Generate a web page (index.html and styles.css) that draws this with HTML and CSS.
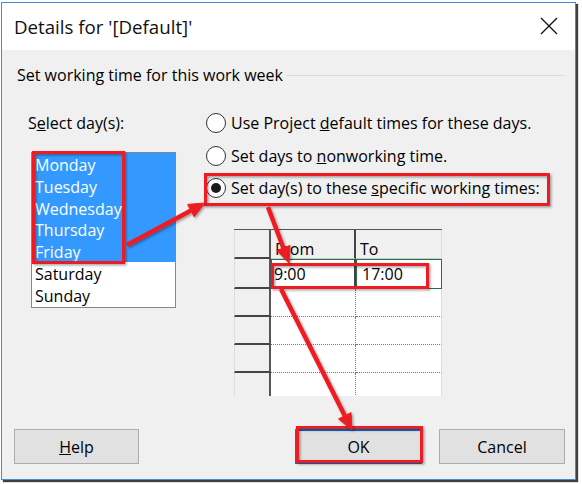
FILE: index.html
```html
<!DOCTYPE html>
<html>
<head>
<meta charset="utf-8">
<link rel="stylesheet" href="styles.css">
</head>
<body>
<div class="dialog">
  <div class="titlebar">
    <span class="title">Details for '[Default]'</span>
    <svg class="close" width="18" height="18" viewBox="0 0 18 18"><path d="M1 1 L17 17 M17 1 L1 17" stroke="#111" stroke-width="1.3" fill="none"/></svg>
  </div>
  <div class="body">
    <div class="group-head"><span>Set working time for this work week</span><span class="rule"></span></div>
    <div class="main">
      <div class="left">
        <div class="label">S<u>e</u>lect day(s):</div>
        <div class="listbox">
          <div class="item sel">Monday</div>
          <div class="item sel">Tuesday</div>
          <div class="item sel">Wednesday</div>
          <div class="item sel">Thursday</div>
          <div class="item sel">Friday</div>
          <div class="item">Saturday</div>
          <div class="item">Sunday</div>
        </div>
      </div>
      <div class="right">
        <div class="radios">
          <div class="radio"><span class="circle"></span><span>Use Project <u>d</u>efault times for these days.</span></div>
          <div class="radio"><span class="circle"></span><span>Set days to <u>n</u>onworking time.</span></div>
          <div class="radio"><span class="circle on"></span><span>Set day(s) to these <u>s</u>pecific working times:</span></div>
        </div>
        <div class="grid">
          <div class="c hdr rh"></div><div class="c hdr">From</div><div class="c hdr last">To</div>
          <div class="c rh"></div><div class="c d r1a">9:00</div><div class="c d r1b">17:00</div>
          <div class="c rh"></div><div class="c d"></div><div class="c d last"></div>
          <div class="c rh"></div><div class="c d"></div><div class="c d last"></div>
          <div class="c rh"></div><div class="c d"></div><div class="c d last"></div>
          <div class="c rh"></div><div class="c d"></div><div class="c d last"></div>
        </div>
      </div>
    </div>
    <div class="buttons">
      <button class="btn"><u>H</u>elp</button>
      <span class="spacer"></span>
      <button class="btn ok">OK</button>
      <button class="btn">Cancel</button>
    </div>
  </div>
</div>
<svg class="annot" width="582" height="484" viewBox="0 0 582 484">
  <defs>
    <filter id="sh" x="-20%" y="-20%" width="140%" height="140%">
      <feDropShadow dx="1.5" dy="1.5" stdDeviation="1" flood-color="#000" flood-opacity="0.35"/>
    </filter>
  </defs>
  <g filter="url(#sh)" fill="none" stroke="#ee1c24" stroke-width="3">
    <rect x="33.5" y="152.5" width="90" height="110"/>
    <rect x="205.5" y="174.5" width="343" height="30"/>
    <rect x="272.5" y="264.5" width="155" height="23"/>
    <rect x="297.5" y="427.5" width="124" height="34"/>
  </g>
  <g filter="url(#sh)" stroke="#ee1c24" stroke-width="4.5" fill="#ee1c24">
    <line x1="127" y1="245" x2="191" y2="210.6"/>
    <polygon points="205,203 194.2,216.8 187.6,204.4" stroke-width="1"/>
    <line x1="268" y1="207" x2="283.4" y2="248"/>
    <polygon points="289,263 276.8,250.5 290,245.5" stroke-width="1"/>
    <line x1="281" y1="289" x2="344.8" y2="415.7"/>
    <polygon points="352,430 338.5,418.9 351,412.6" stroke-width="1"/>
  </g>
</svg>
</body>
</html>
```
FILE: styles.css
```css
html, body {
  margin: 0;
  padding: 0;
  background: #fff;
}
body {
  width: 582px;
  height: 484px;
  position: relative;
  overflow: hidden;
  font-family: "Open Sans", "Noto Sans", sans-serif;
  font-size: 16px;
  color: #000;
}
.dialog {
  margin: 2px 0 0 1px;
  width: 573px;
  height: 476px;
  border: 1px solid #3f8ede;
  background: #f0f0f0;
  display: flex;
  flex-direction: column;
  box-shadow: 2px 2px 1px rgba(0,0,0,0.75);
}
.titlebar {
  height: 47px;
  flex: none;
  background: #fff;
  display: flex;
  align-items: center;
  justify-content: space-between;
  padding: 0 17px 0 12px;
}
.title {
  font-size: 18.7px;
  color: #111;
}
.close {
  display: block;
  margin-top: -2px;
}
.body {
  flex: 1;
  display: flex;
  flex-direction: column;
  padding: 14px 10px 15px 12px;
}
.group-head {
  display: flex;
  align-items: center;
  height: 22px;
  padding-left: 3px;
}
.rule {
  flex: 1;
  height: 1px;
  background: #dcdcdc;
  margin-left: 4px;
}
.main {
  display: flex;
  margin-top: 26px;
}
.left {
  width: 178px;
  padding-left: 14px;
}
.label {
  height: 22px;
  line-height: 22px;
}
.listbox {
  margin: 18px 0 0 3px;
  width: 143px;
  height: 154px;
  border: 1px solid #828790;
  background: #fff;
  overflow: hidden;
}
.item {
  height: 19.8px;
  padding-top: 2px;
  line-height: 21.8px;
  padding-left: 3px;
}
.item.sel {
  background: #3399ff;
  color: #fff;
}
.right {
  display: flex;
  flex-direction: column;
}
.radios {
  display: flex;
  flex-direction: column;
  gap: 10.5px;
}
.radio {
  display: flex;
  align-items: center;
  height: 22px;
  gap: 5px;
}
.circle {
  width: 18px;
  height: 18px;
  border: 1px solid #333;
  border-radius: 50%;
  background: #fff;
  box-sizing: content-box;
  position: relative;
}
.circle.on::after {
  content: "";
  position: absolute;
  left: 4px;
  top: 4px;
  width: 10px;
  height: 10px;
  border-radius: 50%;
  background: #1a1a1a;
}
.grid {
  margin: 30px 0 0 28px;
  width: 208px;
  height: 166px;
  overflow: hidden;
  display: grid;
  grid-template-columns: 37px 85px 86px;
  grid-template-rows: 29px 30px 28px 28px 28px 28px;
  background: #fff;
  border-top: 1px solid #555;
}
.c {
  box-sizing: border-box;
  padding-left: 4px;
  line-height: 28px;
}
.hdr {
  background: #f0f0f0;
  border-right: 2px solid #444;
  border-bottom: 1px solid #ccc;
  padding-top: 5px;
}
.hdr.last {
  border-right: 1px solid #ddd;
}
.rh {
  background: #f0f0f0;
  border-left: 1px solid #ddd;
  border-right: 2px solid #555;
  border-bottom: 2px solid #444;
}
.d {
  background: #fff;
  border-right: 1px dotted #777;
  border-bottom: 1px dotted #777;
}
.d.last {
  border-right: 1px solid #ddd;
}
.r1a {
  border-left: 1px solid #217346;
  border-top: 1px solid #217346;
  border-bottom: 1px solid #217346;
  border-right: 2px solid #444;
  padding-left: 2px;
}
.r1b {
  border: 1px solid #217346;
  padding-left: 5px;
}
.buttons {
  margin-top: auto;
  display: flex;
  align-items: flex-end;
}
.spacer {
  flex: 1;
}
.btn {
  font-family: inherit;
  font-size: 16px;
  color: #000;
  width: 125px;
  height: 35px;
  background: #e1e1e1;
  border: 1px solid #adadad;
  padding: 0;
  margin-right: 17px;
}
.btn:last-child {
  margin-right: 0;
  width: 126px;
}
.btn.ok {
  width: 127px;
  border: 2px solid #0078d7;
}
.annot {
  position: absolute;
  left: 0;
  top: 0;
  pointer-events: none;
}
```
